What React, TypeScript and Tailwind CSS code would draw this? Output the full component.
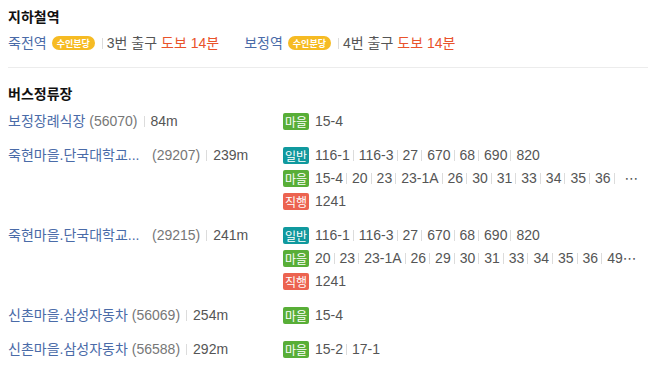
import React from "react";

const FONT = '"Liberation Sans", "Noto Sans CJK KR", sans-serif';

type Kind = "마을" | "일반" | "직행";

const badgeColor: Record<Kind, string> = {
  마을: "bg-[#58ae37]",
  일반: "bg-[#10999e]",
  직행: "bg-[#ec6350]",
};

function Sep({ className = "ml-[3px] mr-[5px]" }: { className?: string }) {
  return <span className={`inline-block w-px h-[11px] bg-[#dcdcdc] ${className}`} />;
}

function BusBadge({ kind }: { kind: Kind }) {
  return (
    <span
      className={`inline-flex items-center justify-center w-[26px] h-[17px] rounded-[2px] text-white text-[12px] leading-none shrink-0 ${badgeColor[kind]}`}
      style={{ fontFamily: '"Noto Sans CJK KR", sans-serif' }}
    >
      {kind}
    </span>
  );
}

type Line = { kind: Kind; routes: string[]; more?: "sep" | "tight" };

type Stop = { name: string; code: string; dist: string; lines: Line[]; clip?: boolean };

const stops: Stop[] = [
  { name: "보정장례식장", code: "(56070)", dist: "84m", lines: [{ kind: "마을", routes: ["15-4"] }] },
  {
    name: "죽현마을.단국대학교...",
    clip: true,
    code: "(29207)",
    dist: "239m",
    lines: [
      { kind: "일반", routes: ["116-1", "116-3", "27", "670", "68", "690", "820"] },
      { kind: "마을", routes: ["15-4", "20", "23", "23-1A", "26", "30", "31", "33", "34", "35", "36"], more: "sep" },
      { kind: "직행", routes: ["1241"] },
    ],
  },
  {
    name: "죽현마을.단국대학교...",
    clip: true,
    code: "(29215)",
    dist: "241m",
    lines: [
      { kind: "일반", routes: ["116-1", "116-3", "27", "670", "68", "690", "820"] },
      { kind: "마을", routes: ["20", "23", "23-1A", "26", "29", "30", "31", "33", "34", "35", "36", "49"], more: "tight" },
      { kind: "직행", routes: ["1241"] },
    ],
  },
  { name: "신촌마을.삼성자동차", code: "(56069)", dist: "254m", lines: [{ kind: "마을", routes: ["15-4"] }] },
  { name: "신촌마을.삼성자동차", code: "(56588)", dist: "292m", lines: [{ kind: "마을", routes: ["15-2", "17-1"] }] },
];

function Subway({ name, exit }: { name: string; exit: string }) {
  return (
    <div className="flex items-center whitespace-nowrap">
      <span className="text-[#4a6ba8]">{name}</span>
      <span
        className="ml-[5px] inline-flex items-center h-[14px] px-[5px] rounded-full bg-[#f6bb23] text-white text-[9px] leading-none font-bold"
        style={{ fontFamily: '"Noto Sans CJK KR", sans-serif' }}
      >
        수인분당
      </span>
      <Sep className="ml-[7px] mr-[4px]" />
      <span className="text-[#555]">{exit}번 출구</span>
      <span className="ml-[4px] text-[#e9532b]">도보 14분</span>
    </div>
  );
}

const Dots = () => (
  <span className="text-[#555]" style={{ fontFamily: '"DejaVu Sans", sans-serif' }}>
    ⋯
  </span>
);

export default function App() {
  return (
    <div
      className="w-[662px] h-[384px] bg-white overflow-hidden pl-2 pr-[14px] text-[14px]"
      style={{ fontFamily: FONT }}
    >
      <h3 className="pt-[7px] h-[27px] leading-5 font-bold text-[14px] text-[#111]">지하철역</h3>
      <div className="mt-[6px] h-5 flex items-center gap-[25px]">
        <Subway name="죽전역" exit="3" />
        <Subway name="보정역" exit="4" />
      </div>
      <div className="mt-[14px] h-px bg-[#ececec]" />
      <h3 className="mt-[16px] h-5 leading-5 font-bold text-[14px] text-[#111]">버스정류장</h3>
      <div className="mt-[6px] flex flex-col gap-[11px]">
        {stops.map((s, i) => (
          <div key={i} className="flex">
            <div className="w-[275px] shrink-0 h-[23px] flex items-center whitespace-nowrap">
              <span className={`text-[#4a6ba8] ${s.clip ? "inline-block w-[140px]" : ""}`}>{s.name}</span>
              <span className="ml-[4px] text-[#777]">{s.code}</span>
              <Sep className="ml-[6px] mr-[6px]" />
              <span className="text-[#555]">{s.dist}</span>
            </div>
            <div className="flex flex-col min-w-0">
              {s.lines.map((l, j) => (
                <div key={j} className="h-[23px] flex items-center whitespace-nowrap">
                  <BusBadge kind={l.kind} />
                  <span className="ml-[6px] flex items-center text-[#555]">
                    {l.routes.map((r, k) => (
                      <React.Fragment key={k}>
                        {k > 0 && <Sep />}
                        <span>{r}</span>
                      </React.Fragment>
                    ))}
                    {l.more === "sep" && (
                      <>
                        <Sep />
                        <span className="ml-[5px]">
                          <Dots />
                        </span>
                      </>
                    )}
                    {l.more === "tight" && <Dots />}
                  </span>
                </div>
              ))}
            </div>
          </div>
        ))}
      </div>
    </div>
  );
}
